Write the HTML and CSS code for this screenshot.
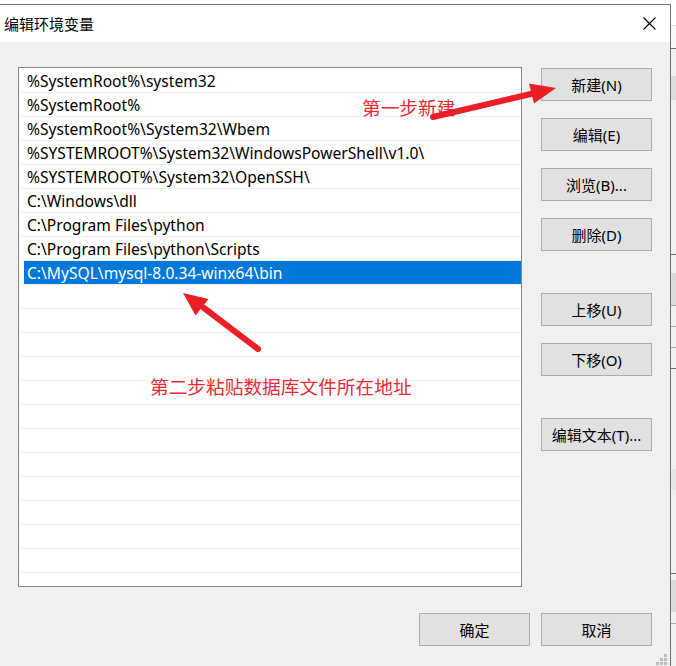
FILE: index.html
```html
<!DOCTYPE html>
<html lang="zh-CN">
<head>
<meta charset="utf-8">
<title>编辑环境变量</title>
<link rel="stylesheet" href="styles.css">
</head>
<body>
<div class="screen">
  <div class="dialog">
    <div class="titlebar">
      <span class="title">编辑环境变量</span>
      <span class="close">
        <svg width="13" height="13" viewBox="0 0 13 13"><path d="M0.5 0.5 L12.5 12.5 M12.5 0.5 L0.5 12.5" stroke="#000" stroke-width="1.1" fill="none"/></svg>
      </span>
    </div>
    <div class="body">
      <div class="main">
        <div class="list">
          <div class="row"><span class="cell">%SystemRoot%\system32</span></div>
          <div class="row"><span class="cell">%SystemRoot%</span></div>
          <div class="row"><span class="cell">%SystemRoot%\System32\Wbem</span></div>
          <div class="row"><span class="cell">%SYSTEMROOT%\System32\WindowsPowerShell\v1.0\</span></div>
          <div class="row"><span class="cell">%SYSTEMROOT%\System32\OpenSSH\</span></div>
          <div class="row"><span class="cell">C:\Windows\dll</span></div>
          <div class="row"><span class="cell">C:\Program Files\python</span></div>
          <div class="row"><span class="cell">C:\Program Files\python\Scripts</span></div>
          <div class="row selected"><span class="cell">C:\MySQL\mysql-8.0.34-winx64\bin</span></div>
          <div class="row"><span class="cell"></span></div>
          <div class="row"><span class="cell"></span></div>
          <div class="row"><span class="cell"></span></div>
          <div class="row"><span class="cell"></span></div>
          <div class="row"><span class="cell"></span></div>
          <div class="row"><span class="cell"></span></div>
          <div class="row"><span class="cell"></span></div>
          <div class="row"><span class="cell"></span></div>
          <div class="row"><span class="cell"></span></div>
          <div class="row"><span class="cell"></span></div>
          <div class="row"><span class="cell"></span></div>
          <div class="row"><span class="cell"></span></div>
          <div class="row"><span class="cell"></span></div>
        </div>
        <div class="side">
          <div class="btn">新建(N)</div>
          <div class="btn">编辑(E)</div>
          <div class="btn">浏览(B)...</div>
          <div class="btn">删除(D)</div>
          <div class="btn spaced">上移(U)</div>
          <div class="btn">下移(O)</div>
          <div class="btn spaced">编辑文本(T)...</div>
        </div>
      </div>
      <div class="footer">
        <div class="btn">确定</div>
        <div class="btn">取消</div>
      </div>
      <svg class="grip" width="11" height="11" viewBox="0 0 11 11">
        <rect x="8" y="0" width="3" height="3" fill="#bdbdbd"/>
        <rect x="4" y="4" width="3" height="3" fill="#bdbdbd"/>
        <rect x="8" y="4" width="3" height="3" fill="#bdbdbd"/>
        <rect x="0" y="8" width="3" height="3" fill="#bdbdbd"/>
        <rect x="4" y="8" width="3" height="3" fill="#bdbdbd"/>
        <rect x="8" y="8" width="3" height="3" fill="#bdbdbd"/>
      </svg>
    </div>
  </div>
  <div class="behind">
    <div class="bh b-white"></div>
    <div class="bh b-line-light"></div>
    <div class="bh b-top"></div>
    <div class="bh b-line-dark"></div>
    <div class="bh b-s1"></div>
    <div class="bh b-block"></div>
    <div class="bh b-s2"></div>
    <div class="bh b-line-dark"></div>
    <div class="bh b-s3"></div>
    <div class="bh b-block2"></div>
    <div class="bh b-line-mid"></div>
    <div class="bh b-s4"></div>
    <div class="bh b-line-mid"></div>
    <div class="bh b-s4"></div>
    <div class="bh b-line-mid"></div>
    <div class="bh b-s4"></div>
    <div class="bh b-line-dark"></div>
    <div class="bh b-s5"></div>
    <div class="bh b-block3"></div>
    <div class="bh b-s6"></div>
    <div class="bh b-line-dark"></div>
    <div class="bh b-s7"></div>
    <div class="bh b-block2"></div>
    <div class="bh b-s8"></div>
    <div class="bh b-line-mid"></div>
    <div class="bh b-rest"></div>
  </div>

  <div class="note note-1">第一步新建</div>
  <div class="note note-2">第二步粘贴数据库文件所在地址</div>
  <svg class="arrows" width="676" height="666" viewBox="0 0 676 666">
    <line x1="433" y1="117" x2="533" y2="93.5" stroke="#ea1f27" stroke-width="6" stroke-linecap="round"/>
    <polygon points="556,88 529,83.5 534,103.5" fill="#ea1f27"/>
    <line x1="258" y1="349" x2="204" y2="308" stroke="#ea1f27" stroke-width="6" stroke-linecap="round"/>
    <polygon points="183,293 208.5,299 195.5,315.5" fill="#ea1f27"/>
  </svg>
</div>
</body>
</html>
```
FILE: styles.css
```css
html, body {
  margin: 0;
  padding: 0;
  background: #ffffff;
}

.screen {
  position: relative;
  width: 676px;
  height: 666px;
  overflow: hidden;
  display: flex;
  font-family: "Noto Sans", "Noto Sans CJK SC", sans-serif;
  color: #000;
}

.dialog {
  width: 671px;
  margin-top: 4px;
  border-top: 1px solid #6f6f6f;
  border-right: 1px solid #6f6f6f;
  box-sizing: border-box;
  display: flex;
  flex-direction: column;
}

.titlebar {
  height: 37px;
  background: #ffffff;
  display: flex;
  align-items: center;
  justify-content: space-between;
  padding-left: 4px;
  padding-right: 14px;
}

.title {
  font-family: "Noto Sans CJK SC", sans-serif;
  font-size: 15px;
  line-height: 20px;
  margin-top: 1px;
}

.close {
  display: flex;
  width: 13px;
  height: 13px;
}

.body {
  position: relative;
  flex: 1;
  background: #f0f0f0;
  padding: 25px 18px 0 18px;
}

.main {
  display: flex;
  gap: 19px;
}

.list {
  width: 504px;
  height: 520px;
  box-sizing: border-box;
  border: 1px solid #828790;
  background: #ffffff;
  padding-top: 1px;
  overflow: hidden;
}

.row {
  height: 24px;
  box-sizing: border-box;
  margin-left: 1px;
  border-bottom: 1px solid #f0f0f0;
  display: flex;
}

.cell {
  flex: 1;
  margin-left: 4px;
  padding-left: 3px;
  padding-top: 2px;
  font-size: 15.6px;
  line-height: 21px;
  white-space: nowrap;
}

.row.selected .cell {
  background: #0078d7;
  color: #ffffff;
}

.side {
  display: flex;
  flex-direction: column;
  gap: 17px;
  padding-top: 1px;
}

.btn {
  width: 111px;
  height: 33px;
  box-sizing: border-box;
  border: 1px solid #adadad;
  background: #e1e1e1;
  display: flex;
  align-items: center;
  justify-content: center;
  font-size: 15px;
  line-height: 20px;
  padding-top: 1px;
  white-space: nowrap;
}

.btn.spaced {
  margin-top: 25px;
}

.footer {
  display: flex;
  justify-content: flex-end;
  gap: 11px;
  margin-top: 26px;
}

.grip {
  position: absolute;
  right: 3px;
  bottom: 1px;
}

.behind {
  width: 5px;
  display: flex;
  flex-direction: column;
  background: #f0f0f0;
}

.bh { width: 100%; flex: none; }
.b-white { height: 25px; background: #ffffff; }
.b-line-light { height: 1px; background: #d9d9d9; }
.b-top { height: 22px; background: #f7f7f7; }
.b-line-dark { height: 1px; background: #6f6f6f; }
.b-s1 { height: 27px; background: #f0f0f0; }
.b-block { height: 24px; background: #dcdcdc; }
.b-s2 { height: 154px; background: #f0f0f0; }
.b-s3 { height: 18px; background: #f0f0f0; }
.b-block2 { height: 32px; background: #dadada; }
.b-line-mid { height: 1px; background: #a8a8a8; }
.b-s4 { height: 20px; background: #f0f0f0; }
.b-s5 { height: 100px; background: #f0f0f0; }
.b-block3 { height: 21px; background: #e6e6e6; }
.b-s6 { height: 83px; background: #f0f0f0; }
.b-s7 { height: 6px; background: #f0f0f0; }
.b-s8 { height: 11px; background: #f0f0f0; }
.b-rest { flex: 1; background: #f0f0f0; }

.note {
  position: absolute;
  font-family: "Noto Sans CJK SC", sans-serif;
  font-size: 18.7px;
  line-height: 24px;
  color: #ea2a31;
  white-space: nowrap;
}

.note-1 { left: 362px; top: 95px; }
.note-2 { left: 150px; top: 374px; }

.arrows {
  position: absolute;
  left: 0;
  top: 0;
  pointer-events: none;
}
```
